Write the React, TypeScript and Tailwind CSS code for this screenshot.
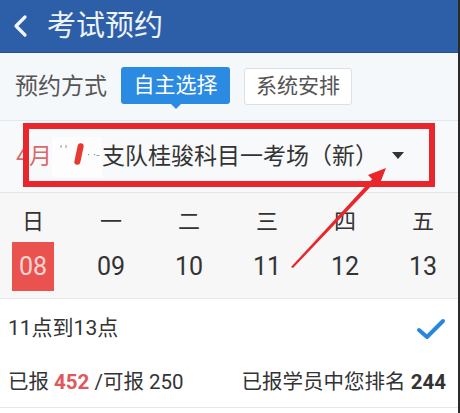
import React from "react";

const FONT = { fontFamily: 'Roboto, "Noto Sans CJK SC", sans-serif' };

const weekdays = ["日", "一", "二", "三", "四", "五"];
const dates = ["08", "09", "10", "11", "12", "13"];

export default function App() {
  return (
    <div
      className="relative w-[460px] h-[413px] overflow-hidden bg-white border-r-2 border-[#2a2a2a]"
      style={FONT}
    >
      {/* Header */}
      <div className="h-[53px] bg-[#2d5fa8] flex items-center pl-[12px] border-b border-[#27508d]">
        <svg width="18" height="24" viewBox="0 0 18 24" className="shrink-0">
          <path d="M13 3 L4 12 L13 21" fill="none" stroke="#f2f6fb" strokeWidth="3.2" strokeLinecap="round" strokeLinejoin="round" />
        </svg>
        <span className="ml-[17px] text-[29px] leading-none text-[#eef3fa]">考试预约</span>
      </div>

      {/* Mode row */}
      <div className="h-[68px] bg-[#f5f8fb] flex items-center pl-[15px] border-b border-[#e6e9ec]">
        <span className="text-[23px] text-[#555] leading-none">预约方式</span>
        <div className="relative ml-[14px] w-[109px] h-[37px] bg-[#2b8ae2] rounded-[3px] flex items-center justify-center mt-[-3px]">
          <span className="text-[21px] text-white leading-none">自主选择</span>
          <div className="absolute left-1/2 -translate-x-1/2 bottom-[-5px] w-0 h-0 border-l-[6px] border-r-[6px] border-t-[6px] border-l-transparent border-r-transparent border-t-[#2b8ae2]" />
        </div>
        <div className="ml-[14px] w-[108px] h-[37px] bg-white border border-[#dcdfe3] rounded-[3px] flex items-center justify-center">
          <span className="text-[21px] text-[#555] leading-none">系统安排</span>
        </div>
      </div>

      {/* Venue row */}
      <div className="relative h-[72px] bg-[#f8f9fa] flex items-center border-b border-[#e4e4e4]">
        <span className="ml-[16px] text-[23px] text-[#d86a6e] leading-none">4月</span>
        <div className="relative w-[50px] h-[40px] bg-[#fdfdfd] blur-[0.5px]">
          <span className="absolute left-[8px] top-[8px] text-[12px] text-[#888] leading-none">' '</span>
          <div className="absolute left-[24px] top-[6px] w-[6px] h-[22px] bg-[#e83a2c] rounded-full rotate-[12deg]" />
          <span className="absolute left-[35px] top-[12px] text-[12px] text-[#999] leading-none">· ·-</span>
        </div>
        <span className="text-[23px] text-[#333] leading-none">支队桂骏科目一考场（新）</span>
        <div className="ml-[14px] mt-[-2px] w-0 h-0 border-l-[6px] border-r-[6px] border-t-[7px] border-l-transparent border-r-transparent border-t-[#333]" />
        <div className="absolute left-[23px] top-[2px] w-[412px] h-[64px] border-[6px] border-[#e8262b]" />
      </div>

      {/* Calendar */}
      <div className="h-[106px] bg-[#f7f7f7] border-b border-[#e8e8e8] overflow-hidden">
        <div className="flex gap-[12px] pt-[13px]">
          {weekdays.map((w) => (
            <div key={w} className="w-[66px] shrink-0 flex justify-center text-[22px] leading-[32px] text-[#333]">
              {w}
            </div>
          ))}
        </div>
        <div className="flex gap-[12px] mt-[4px]">
          {dates.map((d, i) => (
            <div key={d} className="w-[66px] shrink-0 flex justify-center">
              {i === 0 ? (
                <div className="w-[42px] h-[49px] bg-[#ea5250] flex items-center justify-center text-[25px] text-[#fbd6d2] leading-none">
                  {d}
                </div>
              ) : (
                <div className="h-[49px] flex items-center text-[25px] text-[#333] leading-none">{d}</div>
              )}
            </div>
          ))}
        </div>
      </div>

      {/* Time slot */}
      <div className="h-[59px] bg-white flex items-center justify-between pl-[8px] pr-[12px]">
        <span className="text-[21px] text-[#333] leading-none">11点到13点</span>
        <svg width="30" height="24" viewBox="0 0 30 24">
          <path d="M3 13 L11 20 L27 4" fill="none" stroke="#2787dc" strokeWidth="4" strokeLinecap="round" strokeLinejoin="round" />
        </svg>
      </div>

      {/* Stats */}
      <div className="h-[50px] bg-white flex items-center justify-between pl-[8px] pr-[12px] border-b border-[#e8e8e8]">
        <span className="text-[20.5px] text-[#333] leading-none">
          已报 <span className="text-[#e0575c] font-bold">452</span> /可报 250
        </span>
        <span className="text-[20.5px] text-[#333] leading-none">
          已报学员中您排名 <span className="font-bold">244</span>
        </span>
      </div>

      {/* Red annotation arrow */}
      <svg className="absolute left-0 top-0 pointer-events-none" width="460" height="413" viewBox="0 0 460 413">
        <polygon points="291,267 293,268 378,179 375,176" fill="#e8262b" />
        <polygon points="386,168 368,175 379,186" fill="#e8262b" />
      </svg>
    </div>
  );
}
